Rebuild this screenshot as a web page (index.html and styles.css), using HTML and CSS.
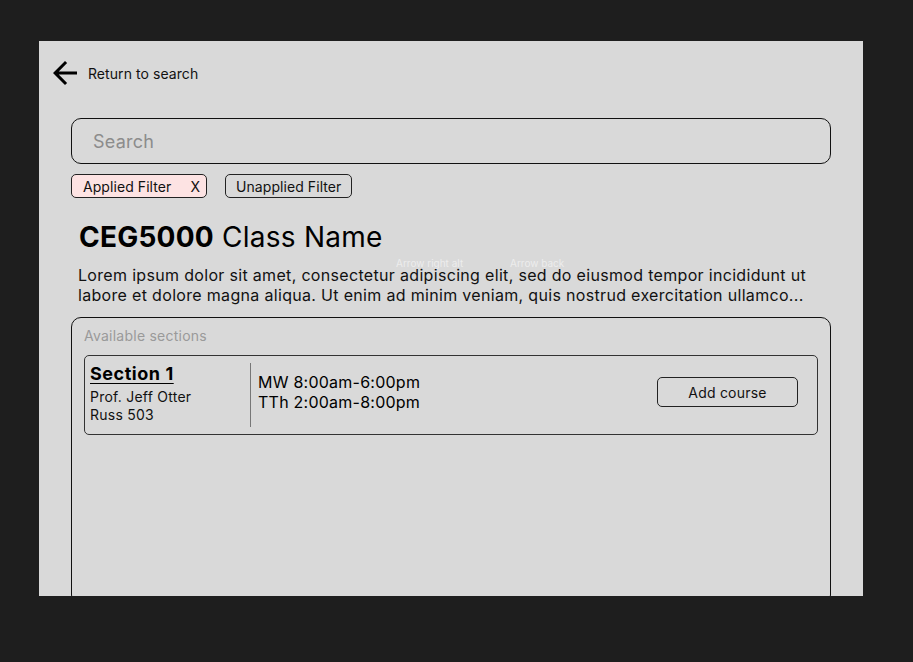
FILE: index.html
```html
<!DOCTYPE html>
<html>
<head>
<meta charset="utf-8">
<link rel="stylesheet" href="styles.css">
</head>
<body>
<div class="frame">
  <div class="back-row">
    <svg class="back-icon" viewBox="0 0 24 24" width="36" height="36"><path d="M20 11H7.83l5.59-5.59L12 4l-8 8 8 8 1.41-1.41L7.83 13H20v-2z" fill="#000"/></svg>
    <span class="back-text">Return to search</span>
  </div>
  <div class="content">
    <div class="search">Search</div>
    <div class="chips">
      <span class="chip chip-applied"><span>Applied Filter</span><span>X</span></span>
      <span class="chip">Unapplied Filter</span>
    </div>
    <h1 class="title"><b>CEG5000</b> Class Name</h1>
    <div class="desc-wrap">
      <p class="desc">Lorem ipsum dolor sit amet, consectetur adipiscing elit, sed do eiusmod tempor incididunt ut labore et dolore magna aliqua. Ut enim ad minim veniam, quis nostrud exercitation ullamco...</p>
      <span class="ghost ghost-1">Arrow right alt</span>
      <span class="ghost ghost-2">Arrow back</span>
    </div>
    <div class="sections">
      <div class="sections-label">Available sections</div>
      <div class="section-card">
        <div class="section-info">
          <div class="section-name">Section 1</div>
          <div class="section-meta first">Prof. Jeff Otter</div>
          <div class="section-meta">Russ 503</div>
        </div>
        <div class="section-times">
          <div>MW 8:00am-6:00pm</div>
          <div>TTh 2:00am-8:00pm</div>
        </div>
        <button class="add-btn">Add course</button>
      </div>
    </div>
  </div>
</div>
</body>
</html>
```

FILE: styles.css
```css
* { box-sizing: border-box; }
body {
  margin: 0;
  background: #1e1e1e;
  font-family: Inter, "Noto Sans", sans-serif;
  letter-spacing: 0.015em;
  color: #000;
}
.frame {
  margin: 41px 0 0 39px;
  width: 824px;
  height: 555px;
  background: #d9d9d9;
}
.back-row {
  display: flex;
  align-items: center;
  padding: 14px 0 0 8px;
  height: 50px;
}
.back-icon { display: block; flex: none; }
.back-text {
  font-size: 14px;
  margin-left: 5px;
  letter-spacing: 0.005em;
  color: #111;
}
.content {
  padding: 27px 32px 0 32px;
}
.search {
  height: 46px;
  border: 1.5px solid #111;
  border-radius: 10px;
  padding: 0 21px;
  display: flex;
  align-items: center;
  font-size: 18px;
  color: #8c8c8c;
}
.chips {
  display: flex;
  gap: 18px;
  margin-top: 10px;
}
.chip {
  height: 24px;
  border: 1px solid #222;
  border-radius: 5px;
  padding: 0 10px;
  display: flex;
  align-items: center;
  font-size: 14px;
  letter-spacing: 0.005em;
  color: #111;
}
.chip-applied {
  background: #fde3e3;
  width: 136px;
  justify-content: space-between;
  padding: 0 6px 0 11px;
}
.title {
  margin: 22px 0 0 8px;
  font-size: 28px;
  font-weight: 400;
  line-height: 34px;
}
.title b { font-weight: 700; }
.desc-wrap { position: relative; }
.desc {
  margin: 11px 0 0 7px;
  font-size: 16px;
  line-height: 20px;
  letter-spacing: 0.02em;
  color: #111;
}
.ghost {
  position: absolute;
  top: -8px;
  font-size: 10px;
  letter-spacing: 0;
  color: rgba(255,255,255,0.55);
}
.ghost-1 { left: 325px; }
.ghost-2 { left: 439px; }
.sections {
  margin-top: 12px;
  height: 288px;
  border: 1.5px solid #111;
  border-radius: 10px;
  padding: 8px 12px;
}
.sections-label {
  font-size: 14px;
  color: #9a9a9a;
  line-height: 20px;
}
.section-card {
  margin-top: 9px;
  height: 80px;
  border: 1.5px solid #333;
  border-radius: 5px;
  display: flex;
  align-items: center;
  padding: 0 19px 0 5px;
}
.section-info {
  width: 161px;
  align-self: stretch;
  margin: 7px 0;
  border-right: 1.5px solid #777;
}
.section-name {
  font-size: 18px;
  font-weight: 700;
  letter-spacing: 0.03em;
  text-decoration: underline;
  text-underline-offset: 3px;
  line-height: 22px;
}
.section-meta {
  font-size: 14px;
  line-height: 18px;
  color: #111;
}
.section-meta.first { margin-top: 3px; }
.section-times {
  margin-left: 7px;
  font-size: 16px;
  line-height: 20px;
  flex: 1;
  margin-top: -6px;
}
.add-btn {
  width: 141px;
  height: 30px;
  border: 1.5px solid #222;
  border-radius: 5px;
  background: transparent;
  font-family: Inter, "Noto Sans", sans-serif;
  letter-spacing: 0.015em;
  font-size: 14px;
  color: #111;
  margin-top: -6px;
}
```
